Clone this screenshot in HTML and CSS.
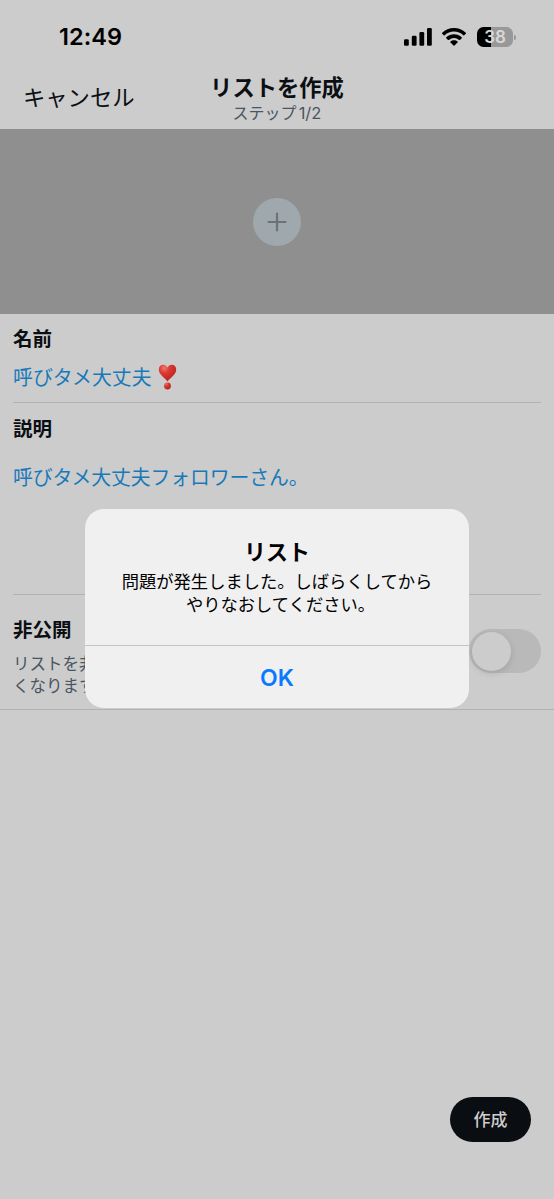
FILE: index.html
```html
<!DOCTYPE html>
<html lang="ja">
<head>
<meta charset="utf-8">
<title>リストを作成</title>
<link rel="stylesheet" href="styles.css">
</head>
<body>
<div class="screen">
  <div class="status">
    <div class="time">12:49</div>
    <div class="indicators">
      <svg class="signal" width="28" height="18" viewBox="0 0 28 18"><rect x="0" y="11.2" width="4.8" height="6.5" rx="1.3"/><rect x="7.8" y="7.8" width="4.8" height="9.9" rx="1.3"/><rect x="15.4" y="4" width="4.8" height="13.7" rx="1.3"/><rect x="23" y="0" width="4.8" height="17.7" rx="1.3"/></svg>
      <svg class="wifi" width="24" height="18" viewBox="0 0 24 18"><path d="M12 0C7.4 0 3.2 1.8.2 4.8q-.4.5 0 .9l1.6 1.6q.4.4.9 0A13.4 13.4 0 0 1 21.300 7.300q.5.400.9 0l1.600-1.600q.4-.4 0-.9C20.800 1.800 16.600 0 12 0z"/><path d="M12 6.200c-3 0-5.700 1.100-7.700 3-.4.400-.4.600 0 1l1.700 1.700q.4.400.9 0a7.700 7.700 0 0 1 10.200 0q.5.400.9 0l1.700-1.700c.4-.4.4-.6 0-1-2-1.900-4.700-3-7.700-3z"/><path d="M12 12.200c-1.400 0-2.600.5-3.500 1.300q-.5.500 0 1l3 3q.5.500 1 0l3-3q.5-.5 0-1c-.9-.8-2.100-1.300-3.500-1.300z"/></svg>
      <div class="battery"><span>38</span></div><i class="cap"></i>
    </div>
  </div>
  <div class="nav">
    <div class="cancel">キャンセル</div>
    <div class="heading"><div class="title">リストを作成</div><div class="step">ステップ<b>1/2</b></div></div>
  </div>
  <div class="banner">
    <div class="add"><svg width="20" height="20" viewBox="0 0 20 20"><path d="M10 .7v18.600M.7 10h18.600"/></svg></div>
  </div>
  <div class="field name">
    <div class="label">名前</div>
    <div class="value">呼びタメ大丈夫<svg class="heart" width="19" height="26" viewBox="0 0 19 26"><defs><radialGradient id="g" cx=".32" cy=".2" r=".85"><stop offset="0" stop-color="#ef7a70"/><stop offset=".35" stop-color="#dc3a32"/><stop offset="1" stop-color="#b3221d"/></radialGradient></defs><path fill="url(#g)" d="M9.500 17.500C7.500 14 .8 11 .8 5.400.8 2.300 2.800.7 5 .7c2.200 0 3.700 1.200 4.500 2.700C10.300 1.900 11.800.7 14 .7c2.200 0 4.200 1.600 4.200 4.700C18.200 11 11.500 14 9.500 17.500z"/><circle fill="url(#g)" cx="9.500" cy="22" r="3.400"/></svg></div>
  </div>
  <div class="field description">
    <div class="label">説明</div>
    <div class="value">呼びタメ大丈夫フォロワーさん。</div>
  </div>
  <div class="private">
    <div class="copy"><div class="label">非公開</div><div class="hint">リストを非<br>くなります</div></div>
    <div class="toggle"><i></i></div>
  </div>
  <div class="footer"><div class="create">作成</div></div>
  <div class="alert">
    <div class="message"><div class="alert-title">リスト</div><div class="alert-text"><div>問題が発生しました。しばらくしてから</div><div class="second">やりなおしてください。</div></div></div>
    <div class="ok">OK</div>
  </div>
</div>
</body>
</html>
```
FILE: styles.css
```css
* { box-sizing: border-box; }
body { margin: 0; font-family: "Noto Sans CJK JP", sans-serif; color: #0b0f13; }
.screen { position: relative; width: 554px; height: 1199px; overflow: hidden; background: #ccc; display: flex; flex-direction: column; white-space: nowrap; }
.status { height: 66px; display: flex; justify-content: space-between; padding: 24px 38px 0 59px; color: #000; }
.time { font: 600 23.500px/26px Inter, sans-serif; letter-spacing: .1px; }
.indicators { display: flex; height: 26px; align-items: center; }
.wifi { margin: 0 11px 0 10px; }
.battery { width: 36px; height: 20px; border-radius: 6.500px; background: linear-gradient(90deg, #000 14px, #989898 14px); color: #d8d8d8; font: 600 17px/20px Inter, sans-serif; text-align: center; }
.cap { width: 2px; height: 5px; margin-left: 1px; border-radius: 0 2px 2px 0; background: #999; }
.nav { height: 63px; display: grid; grid-template-columns: 1fr auto 1fr; padding-left: 23px; padding-right: 23px; }
.cancel { font-size: 22.300px; line-height: 30px; padding-top: 15px; }
.heading { text-align: center; }
.title { font-size: 22.300px; font-weight: 700; line-height: 30px; padding-top: 5px; }
.step { font-size: 16px; line-height: 20px; padding-top: 1px; color: #4a5560; }
.step b { font: 400 16.500px/20px Inter, sans-serif; margin-left: 2px; }
.banner { height: 185px; background: #8f8f8f; display: flex; align-items: center; justify-content: center; }
.add { width: 48px; height: 48px; border-radius: 50%; background: #9fa8ac; display: grid; place-items: center; }
.add path { stroke: #6c7276; stroke-width: 2.200; }
.field { margin: 0 13px; border-bottom: 1px solid #aeb3b6; }
.label { font-size: 19.500px; font-weight: 700; line-height: 28px; }
.value { font-size: 19.900px; line-height: 28px; color: #1879b9; }
.name { height: 89px; padding-top: 10px; }
.name .value { display: flex; align-items: center; padding-top: 11px; }
.heart { margin-left: 6px; }
.description { height: 192px; padding-top: 11px; }
.description .value { padding-top: 21px; letter-spacing: -.150px; }
.private { height: 115px; border-bottom: 1px solid #b0b2b4; display: flex; justify-content: space-between; padding: 20px 13px 0; }
.hint { font-size: 16.500px; line-height: 22px; padding-top: 9px; color: #4a5560; }
.toggle { width: 72px; height: 44px; flex: none; margin-top: 14px; padding: 2.500px; border-radius: 22px; background: #b9b9ba; }
.toggle i { display: block; width: 39px; height: 39px; border-radius: 50%; background: #ccc; box-shadow: 0 2px 7px #0002; }
.footer { margin-top: auto; display: flex; justify-content: flex-end; padding: 0 23px 57px; }
.create { width: 81px; height: 45px; border-radius: 23px; background: #0a0e13; color: #ccc; font-size: 17px; font-weight: 500; line-height: 43px; text-align: center; }
.alert { position: absolute; left: 85px; top: 509px; width: 384px; height: 199px; border-radius: 19px; background: #f0f0f1; color: #000; text-align: center; }
.message { height: 137px; padding-top: 26px; border-bottom: 1px solid #c4c4c6; }
.alert-title { font-size: 22px; font-weight: 700; line-height: 30px; }
.alert-text { font-size: 17.300px; line-height: 23px; padding-top: 4px; }
.second { padding-left: 7px; }
.ok { font: 600 23px/64px Inter, sans-serif; color: #087aff; }
```
